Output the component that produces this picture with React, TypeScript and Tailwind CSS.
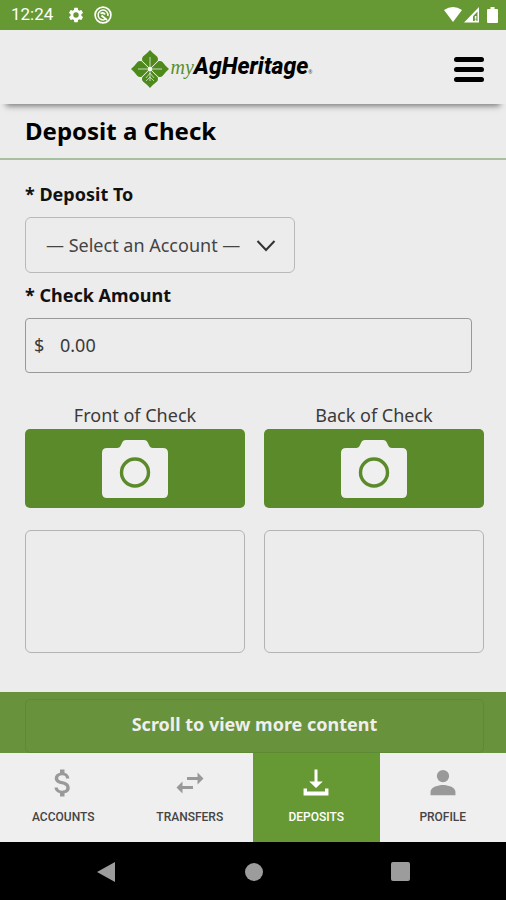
import React from "react";

const CameraIcon = () => (
  <svg viewBox="0 0 66 58" className="h-[58px] w-[66px]" aria-hidden="true">
    <path
      d="M5 8h10q3 0 4-3l1-2q1-3 4-3h18q3 0 4 3l1 2q1 3 4 3h10q5 0 5 5v40q0 5-5 5H5q-5 0-5-5V13q0-5 5-5z"
      fill="#efefef"
    />
    <circle cx="33" cy="32.5" r="13.5" fill="none" stroke="#5a8a2a" strokeWidth="3.4" />
  </svg>
);

const Leaf = ({ angle, veined }: { angle: number; veined?: boolean }) => (
  <g transform={`rotate(${angle} 20 20)`}>
    <path d="M20 1Q23 4.500 27 7.500Q28.500 9 27.800 11.700L20 19.500L12.200 11.700Q11.500 9 13 7.500Q17 4.500 20 1Z" fill="#4d8a1b" />
    <path d="M20 8V19" stroke="#ececec" strokeWidth="0.8" />
    {veined && (
      <path d="M20 16l-4-5M20 16l4-5M20 12l-4-4M20 12l4-4" stroke="#ececec" strokeWidth="0.7" fill="none" />
    )}
  </g>
);

const Logo = () => (
  <a href="#home" className="flex items-center" aria-label="myAgHeritage">
    <svg viewBox="0 0 40 40" className="h-10 w-10" aria-hidden="true">
      <Leaf angle={0} />
      <Leaf angle={90} />
      <Leaf angle={180} veined />
      <Leaf angle={270} />
      <path d="M12 12L28 28M28 12L12 28" stroke="#dfe8d3" strokeWidth="0.8" />
      <circle cx="20" cy="20" r="2.2" fill="#f4f6f0" />
    </svg>
    <span className="flex items-baseline whitespace-nowrap">
      <span className="pl-px font-['Liberation_Serif',serif] text-[20px] italic leading-8 text-[#5a8f2c]">my</span>
      <span className="font-[Roboto,'Liberation_Sans',sans-serif] text-[23px] font-extrabold italic leading-8 text-black">
        AgHeritage
      </span>
      <span className="text-[5px] leading-8 text-[#444]">®</span>
    </span>
  </a>
);

const tabs = [
  {
    name: "ACCOUNTS",
    icon: (
      <path d="M11.8 10.9c-2.27-.59-3-1.2-3-2.15 0-1.09 1.01-1.85 2.7-1.85 1.78 0 2.44.85 2.5 2.1h2.21c-.07-1.72-1.12-3.3-3.21-3.81V3h-3v2.16c-1.94.42-3.5 1.68-3.5 3.61 0 2.31 1.91 3.46 4.7 4.13 2.5.6 3 1.48 3 2.41 0 .69-.49 1.79-2.7 1.79-2.06 0-2.87-.92-2.98-2.1h-2.2c.12 2.19 1.76 3.42 3.68 3.83V21h3v-2.15c1.95-.37 3.5-1.5 3.5-3.55 0-2.84-2.43-3.81-4.7-4.4z" />
    ),
  },
  {
    name: "TRANSFERS",
    icon: <path d="M6.99 11L3 15l3.99 4v-3H14v-2H6.99v-3zM21 9l-3.99-4v3H10v2h7.01v3L21 9z" />,
  },
  {
    name: "DEPOSITS",
    active: true,
    icon: <path d="M11 3h2v8h3.5L12 15.3 7.500 11H11zM3.700 15.700h2.300v2h12v-2h2.300v4.600H3.700z" />,
  },
  {
    name: "PROFILE",
    icon: <path d="M12 11.500a4.100 4.100 0 1 0 0-8.200 4.100 4.100 0 0 0 0 8.200zM12 13.300c-3 0-8.300 1.300-8.300 4.600v2.300h16.600v-2.300c0-3.300-5.300-4.600-8.300-4.600z" />,
  },
];

export default function App() {
  return (
    <div className="flex min-h-screen flex-col bg-[#ececec] font-['Noto_Sans','Open_Sans',sans-serif] text-[#3a3a3a]">
      <div className="flex h-[30px] items-center justify-between bg-[#669934] pr-2 pl-[11px] text-white">
        <div className="flex items-center">
          <span className="w-[56px] font-[Roboto,sans-serif] text-[17px]">12:24</span>
          <svg viewBox="0 0 24 24" className="mr-[9px] h-[18px] w-[18px]" fill="#fff" aria-hidden="true">
            <path d="M19.14 12.94c.04-.3.06-.61.06-.94s-.02-.64-.07-.94l2.03-1.58a.49.49 0 0 0 .12-.61l-1.92-3.32a.49.49 0 0 0-.59-.22l-2.39.96c-.5-.38-1.030-.7-1.620-.94l-.36-2.540a.48.48 0 0 0-.48-.41h-3.840c-.24 0-.43.17-.47.41l-.36 2.540c-.59.24-1.130.57-1.620.94l-2.390-.96a.48.48 0 0 0-.59.22L2.740 8.870c-.12.21-.08.47.12.61l2.030 1.580c-.05.3-.09.63-.09.94s.02.64.07.94l-2.030 1.580a.49.49 0 0 0-.12.61l1.920 3.320c.12.22.37.29.59.22l2.390-.96c.5.38 1.030.7 1.620.94l.36 2.540c.05.24.24.41.48.41h3.840c.24 0 .44-.17.47-.41l.36-2.540c.59-.24 1.130-.56 1.620-.94l2.390.96c.22.08.47 0 .59-.22l1.920-3.320a.48.48 0 0 0-.12-.61zM12 15.600a3.600 3.600 0 1 1 0-7.200 3.600 3.600 0 0 1 0 7.200z" />
          </svg>
          <svg viewBox="0 0 18 18" className="h-[18px] w-[18px]" fill="none" stroke="#fff" aria-hidden="true">
            <circle cx="9" cy="9" r="7.900" strokeWidth="1.700" />
            <path d="M11.500 13.200A4.900 4.900 0 1 1 13.800 10" strokeWidth="1.500" />
            <path d="M6.500 7.500q3-1.500 4.500 1M7.500 9.500L13 14" strokeWidth="1.900" />
          </svg>
        </div>
        <svg viewBox="0 0 54 16" className="h-4 w-[54px]" fill="#fff" aria-hidden="true">
          <path d="M0 3Q9-3 18 3L9 15z" />
          <path d="M35 0V15.500H20zM33.500 4.500L29 9.300V14h4.500z" fillRule="evenodd" />
          <path d="M30.800 9h1.600v2.700h-1.600zM30.800 12.500h1.600V14h-1.600z" />
          <path d="M44 2h2.500V0h4v2H53q1 0 1 1v12q0 1-1 1h-9q-1 0-1-1V3q0-1 1-1z" />
        </svg>
      </div>

      <header className="flex h-[74px] items-center pt-1 pr-[22px] shadow-[0_8px_6px_-6px_#777]">
        <div className="flex flex-1 justify-center">
          <Logo />
        </div>
        <button type="button" aria-label="Menu" className="ml-3 flex flex-col gap-[5px]">
          <span className="h-[5px] w-[30px] rounded-sm bg-black" />
          <span className="h-[5px] w-[30px] rounded-sm bg-black" />
          <span className="h-[5px] w-[30px] rounded-sm bg-black" />
        </button>
      </header>

      <h1 className="mt-1 h-[52px] border-b-2 border-[#a9bfa1] px-[25px] text-[24px] font-bold leading-[46px] text-black">
        Deposit a Check
      </h1>

      <main className="flex flex-1 flex-col pr-[22px] pb-[39px] pl-[25px]">
        <label htmlFor="account" className="mt-5 text-[18px] font-bold leading-7 text-[#111]">
          * Deposit To
        </label>
        <div className="relative mt-[9px] w-[270px]">
          <select
            id="account"
            className="h-[56px] w-full appearance-none rounded-md border border-[#b9b9b9] bg-transparent pl-[20px] text-[18px] text-[#444]"
          >
            <option>— Select an Account —</option>
          </select>
          <svg
            viewBox="0 0 20 12"
            className="pointer-events-none absolute top-[23px] right-[19px] h-3 w-5"
            fill="none"
            stroke="#333"
            strokeWidth="2"
            aria-hidden="true"
          >
            <path d="M1.500 1L10 10 18.500 1" />
          </svg>
        </div>
        <label htmlFor="amount" className="mt-2 text-[18px] font-bold leading-7 text-[#111]">
          * Check Amount
        </label>
        <div className="mt-[9px] mr-3 flex h-[55px] items-center rounded-[4px] border border-[#999] px-2 text-[18px]">
          <span className="w-[26px]">$</span>
          <input id="amount" defaultValue="0.00" className="min-w-0 flex-1 bg-transparent outline-none" />
        </div>

        <div className="mt-7 grid grid-cols-2 gap-x-[19px] gap-y-[22px]">
          {["Front of Check", "Back of Check"].map((side) => (
            <div key={side} className="flex flex-col">
              <span className="text-center text-[18px] leading-7">{side}</span>
              <button
                type="button"
                aria-label={side}
                className="flex h-[79px] items-center justify-center rounded-[5px] bg-[#5a8a2a]"
              >
                <CameraIcon />
              </button>
            </div>
          ))}
          <div className="h-[123px] rounded-md border border-[#b3b3b3]" />
          <div className="h-[123px] rounded-md border border-[#b3b3b3]" />
        </div>
      </main>

      <div className="flex h-[61px] flex-col bg-[#69923d] pt-[7px] pr-[22px] pl-[25px]">
        <button
          type="button"
          className="flex-1 rounded-[5px] border border-[#5f8a35] pb-1 text-[18px] font-bold text-[#efefef]"
        >
          Scroll to view more content
        </button>
      </div>

      <nav className="grid h-[89px] grid-cols-4 bg-[#efefef]">
        {tabs.map((t) => (
          <a
            key={t.name}
            href={`#${t.name.toLowerCase()}`}
            className={
              t.active
                ? "flex flex-col items-center bg-[#669933] pt-3 text-white"
                : "flex flex-col items-center pt-3 text-[#999]"
            }
          >
            <svg viewBox="0 0 24 24" className="h-9 w-9" fill="currentColor" aria-hidden="true">
              {t.icon}
            </svg>
            <span
              className={
                t.active
                  ? "mt-2 font-[Roboto,sans-serif] text-[12px] font-medium leading-4"
                  : "mt-2 font-[Roboto,sans-serif] text-[12px] font-medium leading-4 text-[#444]"
              }
            >
              {t.name}
            </span>
          </a>
        ))}
      </nav>

      <div className="flex h-[59px] items-center justify-between bg-black px-24">
        <button type="button" aria-label="Back">
          <svg viewBox="0 0 20 20" className="h-5 w-5" fill="#9c9c9c" aria-hidden="true">
            <path d="M19 0v20L1 10z" />
          </svg>
        </button>
        <button type="button" aria-label="Home" className="h-[18px] w-[18px] rounded-full bg-[#9c9c9c]" />
        <button type="button" aria-label="Recent apps" className="h-[19px] w-[19px] rounded-[2px] bg-[#9c9c9c]" />
      </div>
    </div>
  );
}
